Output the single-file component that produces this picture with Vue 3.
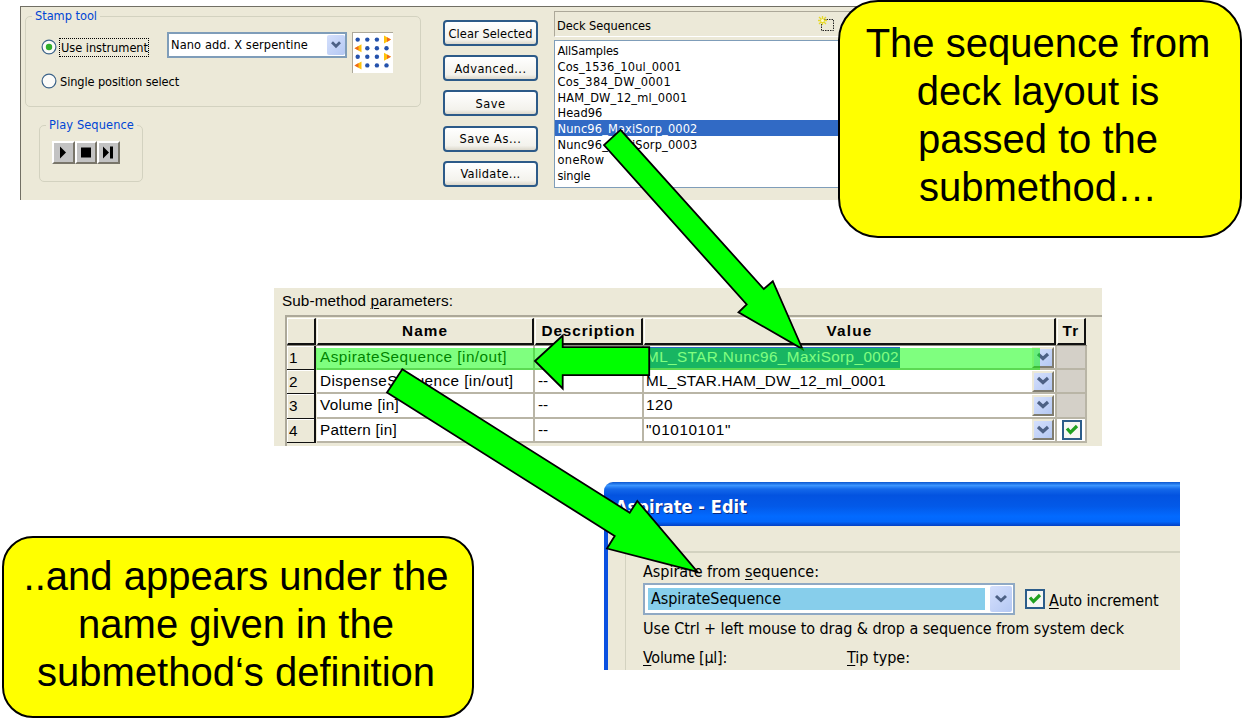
<script setup>
const vFit = {
  mounted(el, { value }) {
    const natural = el.getBoundingClientRect().width
    const count = Array.from(el.textContent).length
    el.style.letterSpacing = (value - natural) / count + 'px'
  },
}

const actions = [
  { label: 'Clear Selected', w: 84 },
  { label: 'Advanced...', w: 72 },
  { label: 'Save', w: 30 },
  { label: 'Save As...', w: 62 },
  { label: 'Validate...', w: 60 },
]

const sequences = [
  { name: 'AllSamples', w: 61 },
  { name: 'Cos_1536_10ul_0001', w: 124 },
  { name: 'Cos_384_DW_0001', w: 113.5 },
  { name: 'HAM_DW_12_ml_0001', w: 130 },
  { name: 'Head96', w: 45 },
  { name: 'Nunc96_MaxiSorp_0002', w: 140, selected: true },
  { name: 'Nunc96_MaxiSorp_0003', w: 140 },
  { name: 'oneRow', w: 47 },
  { name: 'single', w: 33 },
]

const rows = [
  { name: 'AspirateSequence [in/out]', nw: 187, desc: '', value: 'ML_STAR.Nunc96_MaxiSorp_0002', vw: 253, selected: true },
  { name: 'DispenseSequence [in/out]', nw: 193.5, desc: '--', value: 'ML_STAR.HAM_DW_12_ml_0001', vw: 240 },
  { name: 'Volume [in]', nw: 79, desc: '--', value: '120', vw: 27 },
  { name: 'Pattern [in]', nw: 77, desc: '--', value: '"01010101"', vw: 85, checked: true },
]

const dots = []
for (let r = 0; r < 4; r++) {
  const start = r % 2 ? 1 : 0
  for (let c = start; c < start + 3; c++) dots.push({ x: 4.7 + c * 9.6, y: 6.6 + r * 8.6 })
}
</script>

<template>
  <main class="slide">
    <section class="deck">
      <div class="left">
        <div class="group stamp">
          <span class="legend"><span v-fit="62">Stamp tool</span></span>
          <div class="stamp-row">
            <svg class="radio" width="16" height="16" viewBox="0 0 16 16">
              <circle cx="8" cy="8" r="6.9" fill="#fbfbf9" stroke="#3c6389" stroke-width="1.2" />
              <circle cx="8" cy="8" r="3.2" fill="#2fae2b" />
            </svg>
            <span class="focus"><span v-fit="87">Use instrument</span></span>
            <div class="combo">
              <span v-fit="137">Nano add. X serpentine</span>
              <i class="drop"><svg width="12" height="8" viewBox="0 0 12 8"><path d="M2 1.3 6 5.3 10 1.3" fill="none" stroke="#4d6185" stroke-width="2.7" /></svg></i>
            </div>
            <div class="pattern">
              <svg width="40" height="40" viewBox="0 0 40 40">
                <circle v-for="(d, i) in dots" :key="i" :cx="d.x" :cy="d.y" r="2.2" fill="#2452ac" />
                <g fill="#ffc20a">
                  <path d="M31 2.600 38 6.600 31 10.600Z" /><path d="M31 19.800 38 23.800 31 27.800Z" />
                  <path d="M8.500 11.200 1.500 15.200 8.500 19.200Z" /><path d="M8.500 28.400 1.500 32.400 8.500 36.400Z" />
                </g>
                <g fill="#ef6820">
                  <path d="M34 4.300 38 6.600 34 8.900Z" /><path d="M34 21.500 38 23.800 34 26.100Z" />
                  <path d="M5.500 12.900 1.500 15.200 5.500 17.500Z" /><path d="M5.500 30.100 1.500 32.400 5.500 34.700Z" />
                </g>
              </svg>
            </div>
          </div>
          <div class="single-row">
            <svg class="radio" width="16" height="16" viewBox="0 0 16 16">
              <circle cx="8" cy="8" r="6.9" fill="#fbfbf9" stroke="#3c6389" stroke-width="1.2" />
            </svg>
            <span v-fit="119">Single position select</span>
          </div>
        </div>
        <div class="group play">
          <span class="legend"><span v-fit="85">Play Sequence</span></span>
          <div class="keys">
            <i><svg width="20" height="20"><path d="M7 4.500 13 10.500 7 16.500Z" /></svg></i>
            <i><svg width="20" height="20"><path d="M5 5.500H15V15.500H5Z" /></svg></i>
            <i><svg width="20" height="20"><path d="M5 4.500 11 10.500 5 16.500ZM12 4.500H15V16.500H12Z" /></svg></i>
          </div>
        </div>
      </div>
      <div class="actions">
        <button v-for="a in actions" :key="a.label"><span v-fit="a.w">{{ a.label }}</span></button>
      </div>
      <div class="lists">
        <header>
          <span v-fit="94">Deck Sequences</span>
          <svg width="18" height="18" viewBox="0 0 18 18">
            <path d="M4.500 4.500H16.500V15.500H4.500Z" fill="none" stroke="#222" stroke-dasharray="1.500 1" />
            <path d="M5.500 1V10M1 5.500H10M2 2 9 9M9 2 2 9" stroke="#e6d92c" stroke-width="1.300" />
            <circle cx="5.500" cy="5.500" r="1.500" fill="#fffbd0" />
          </svg>
        </header>
        <ul>
          <li v-for="s in sequences" :key="s.name" :class="{ on: s.selected }"><span v-fit="s.w">{{ s.name }}</span></li>
        </ul>
      </div>
    </section>

    <section class="params">
      <p><span v-fit="171">Sub-method <u>p</u>arameters:</span></p>
      <div class="table">
        <div class="tr head">
          <b></b><b><span v-fit="46">Name</span></b><b><span v-fit="94">Description</span></b><b><span v-fit="46">Value</span></b><b><span v-fit="17">Tr</span></b>
        </div>
        <div v-for="(r, i) in rows" :key="i" class="tr">
          <div class="num">{{ i + 1 }}</div>
          <div class="cell"><span v-fit="r.nw">{{ r.name }}</span></div>
          <div class="cell">{{ r.desc }}</div>
          <div class="cell val">
            <span :class="{ sel: r.selected }"><span v-fit="r.vw">{{ r.value }}</span></span>
            <i class="drop raised"><svg width="14" height="10" viewBox="0 0 14 10"><path d="M2 2 7 6.500 12 2" fill="none" stroke="#4d6185" stroke-width="3.200" /></svg></i>
          </div>
          <div class="cell tick" :class="{ off: !r.checked }">
            <i v-if="r.checked" class="check"><svg width="14" height="14" viewBox="0 0 14 14"><path d="M2 5.500 5.500 9.500 12 3" fill="none" stroke="#21a121" stroke-width="3.200" /></svg></i>
          </div>
        </div>
      </div>
    </section>

    <section class="dialog">
      <h1><span v-fit="132">Aspirate - Edit</span></h1>
      <div class="body">
        <div class="form">
          <p><span v-fit="176">Aspirate from <u>s</u>equence:</span></p>
          <div class="line">
            <div class="bigcombo">
              <div class="fill"><span v-fit="130">AspirateSequence</span></div>
              <i class="drop"><svg width="14" height="10" viewBox="0 0 14 10"><path d="M2 2 7 6.500 12 2" fill="none" stroke="#4d6185" stroke-width="3" /></svg></i>
            </div>
            <i class="check"><svg width="14" height="14" viewBox="0 0 14 14"><path d="M2 5.500 5.500 9.500 12 3" fill="none" stroke="#21a121" stroke-width="3.200" /></svg></i>
            <span class="auto" v-fit="109.5"><u>A</u>uto increment</span>
          </div>
          <p class="hint"><span v-fit="481">Use Ctrl + left mouse to drag &amp; drop a sequence from system deck</span></p>
          <div class="pair">
            <div><span v-fit="84"><u>V</u>olume [µl]:</span></div>
            <div><span v-fit="63"><u>T</u>ip type:</span></div>
          </div>
        </div>
      </div>
    </section>

    <svg class="arrows" width="1246" height="720" viewBox="0 0 1246 720">
      <g fill="#0f0" stroke="#000" stroke-width="1.8" stroke-miterlimit="10">
        <path d="M620.500 129.800 604 145 746.700 304.500 738.500 312.300 802.500 349 772.800 281.200 763.800 289Z" />
        <path d="M316 348H1040V370H316Z" fill-opacity=".5" stroke="none" />
        <path d="M535 361 562.700 335.500V347.200H649.200V375.200H562.700V388.500Z" />
        <path d="M402.300 369.300 387 392.500 614.700 536 607 548.500 697.500 571.800 637.300 500.900 629.700 512.700Z" />
      </g>
    </svg>

    <aside class="callout one">
      <div>The sequence from</div>
      <div>deck layout is</div>
      <div>passed to the</div>
      <div>submethod…</div>
    </aside>
    <aside class="callout two">
      <div>..and appears under the</div>
      <div>name given in the</div>
      <div>submethod‘s definition</div>
    </aside>
  </main>
</template>

<style>
body { background: #fff; }
</style>

<style scoped>
* { box-sizing: border-box; }
.slide { position: relative; width: 1246px; height: 720px; overflow: hidden; background: #fff; color: #000; font-family: "DejaVu Sans Condensed", "DejaVu Sans", sans-serif; font-stretch: condensed; }
span { white-space: pre; }
p, h1, ul { margin: 0; padding: 0; }
i { font-style: normal; }
svg { display: block; }
u { text-underline-offset: 2px; text-decoration-thickness: 1px; }

.deck { position: absolute; left: 20px; top: 6px; width: 850px; height: 194px; background: #ece9d8; border-top: 1px solid #716f64; border-left: 1px solid #716f64; display: flex; font-size: 12.700px; }
.left { width: 422px; padding: 8px 0 0 4px; }
.group { border: 1.500px solid #d3d2c0; border-radius: 5px; }
.legend { display: block; width: max-content; height: 16px; line-height: 14px; margin-top: -8px; padding: 0 3px; background: #ece9d8; color: #0046d5; }
.stamp { width: 396px; height: 91px; margin-top: 1px; padding-left: 6px; }
.stamp-row { display: flex; height: 42px; margin-top: 7px; padding-left: 9px; }
.radio { flex: none; margin-top: 7px; }
.focus { border: 1px dotted #000; height: 19px; line-height: 17px; width: 90px; margin: 6px 0 0 2px; padding-left: 1px; }
.combo { width: 180px; height: 26px; margin-left: 18px; border: 2px solid #7f9db9; background: #fff; padding: 0 0 0 2px; display: flex; justify-content: space-between; align-items: center; line-height: 22px; }
.drop { width: 18px; height: 20px; border-radius: 2px; background: linear-gradient(135deg, #d5e0fc, #b4c8f3); display: flex; align-items: center; justify-content: center; flex: none; }
.pattern { width: 41px; height: 41px; margin-left: 5px; background: #fff; border-top: 1px solid #aca899; border-left: 1px solid #aca899; }
.single-row { display: flex; align-items: center; margin-top: -1px; padding-left: 9px; gap: 3px; height: 16px; }
.single-row .radio { margin: 0; }
.play { width: 104px; height: 57px; margin: 18px 0 0 14px; padding-left: 6px; }
.keys { display: flex; margin: 7px 0 0 6px; }
.keys i { width: 22.500px; height: 23px; background: #c3c3c3; border: 2px solid; border-color: #fff #79766a #79766a #fff; }
.keys svg { margin: -1px; }

.actions { width: 95px; margin-top: 13px; display: flex; flex-direction: column; gap: 9.200px; }
button { height: 26px; width: 95px; border: 2px solid #2c5a88; border-radius: 4px; background: linear-gradient(#fff, #f3f2ec 80%, #dcd8cc); padding: 1px 0 0; font: inherit; line-height: 20px; color: #000; text-align: center; }

.lists { margin: 4px 0 0 16px; flex: 1; }
.lists header { height: 26px; border-top: 1px solid #aca899; border-left: 1px solid #aca899; border-bottom: 1px solid #fff; display: flex; align-items: center; padding: 2px 0 0 2px; }
.lists header svg { margin: 0 0 3px 166px; }
ul { margin-top: 3px; height: 148px; border: 1.500px solid #7f9db9; background: #fff; padding-top: 1px; list-style: none; }
li { height: 15.600px; line-height: 17px; padding-left: 2.500px; }
.on { background: #316ac5; color: #fff; }

.params { position: absolute; left: 274px; top: 288px; width: 828px; height: 158px; background: #ece9d8; overflow: hidden; font-family: "Liberation Sans", sans-serif; font-size: 15.300px; }
.params p { height: 27px; padding-left: 8px; line-height: 26px; }
.table { margin-left: 11px; border-top: 2px solid #aca899; border-left: 2px solid #aca899; height: 135px; width: 830px; }
.tr { display: grid; grid-template-columns: 30px 218px 109px 413px 30px; height: 24.200px; }
.head { width: 800px; height: 29px; padding-top: 1px; border-bottom: 1px solid #8c897e; }
.head b { background: #ece9d8; border-top: 1px solid #fff; border-left: 1px solid #fff; border-right: 2px solid #111; border-bottom: 2px solid #111; text-align: center; line-height: 23px; margin-right: 1px; }
.num { background: #ece9d8; border: 1px solid #111; border-width: 0 2px 1.500px 0; box-shadow: inset 1px 1px #fff; margin-right: 1px; padding-left: 2px; line-height: 23px; }
.cell { background: #fff; border-right: 2px solid #b9b5a6; border-bottom: 2px solid #b9b5a6; padding-left: 3px; line-height: 22px; }
.val { display: flex; justify-content: space-between; align-items: center; padding: 0 1px 0 2px; }
.sel { background: #316ac5; color: #fff; padding: 0 1px; margin-left: -1px; height: 21px; line-height: 20px; }
.raised { width: 22px; height: 21px; border-radius: 0; border: 2px solid; border-color: #ece9d8 #807d70 #807d70 #ece9d8; }
.tick { padding: 1px 0 0 5px; }
.off { background: #d4d0c8; }
.check { width: 20px; height: 20px; border: 2px solid #2c5d8a; background: #f7f7f3; display: flex; align-items: center; justify-content: center; flex: none; }

.dialog { position: absolute; left: 604px; top: 482px; width: 576px; height: 188px; overflow: hidden; background: #ece9d8; border-radius: 9px 0 0 0; font-size: 16px; }
h1 { height: 44px; line-height: 50px; padding-left: 11px; font-size: 18px; font-weight: bold; color: #fff; text-shadow: 1px 1px #0a2a80; background: linear-gradient(#0b56cf 0, #3b95ff 8%, #1468ea 16%, #0353e0 30%, #0359e8 55%, #026aff 78%, #0267fb 90%, #0340c4 100%); }
.body { height: 144px; border-left: 4px solid #0a50e0; padding: 25px 0 0 17px; }
.form { border-top: 2px solid #d3d2c0; border-left: 1.500px solid #d3d2c0; height: 130px; padding: 9px 0 0 17px; }
.form p { height: 21px; line-height: 20px; }
.line { display: flex; align-items: center; height: 32px; }
.bigcombo { width: 372px; height: 32px; border: 2px solid #8fa9c4; background: #fff; display: flex; align-items: center; padding: 0 1px 0 3px; justify-content: space-between; flex: none; }
.fill { width: 337px; height: 22px; line-height: 22px; background: #87ceeb; padding-left: 3px; }
.bigcombo .drop { width: 22px; height: 26px; }
.line .check { margin: 0 4px 0 10px; }
.auto { padding-top: 3px; }
.form .hint { margin-top: 4px; height: 29px; }
.pair { display: flex; line-height: 20px; }
.pair div { width: 204px; }

.arrows { position: absolute; left: 0; top: 0; }
.callout { position: absolute; background: #ff0; border: 2px solid #000; font: 40px/48px "Liberation Sans", Arial, sans-serif; display: flex; flex-direction: column; align-items: center; white-space: pre; }
.one { left: 838px; top: 0; width: 404px; height: 238px; border-radius: 40px; padding: 17px 4px 0 0; }
.two { left: 2px; top: 536px; width: 472px; height: 182px; border-radius: 31px; padding: 14px 4px 0 0; }
</style>
